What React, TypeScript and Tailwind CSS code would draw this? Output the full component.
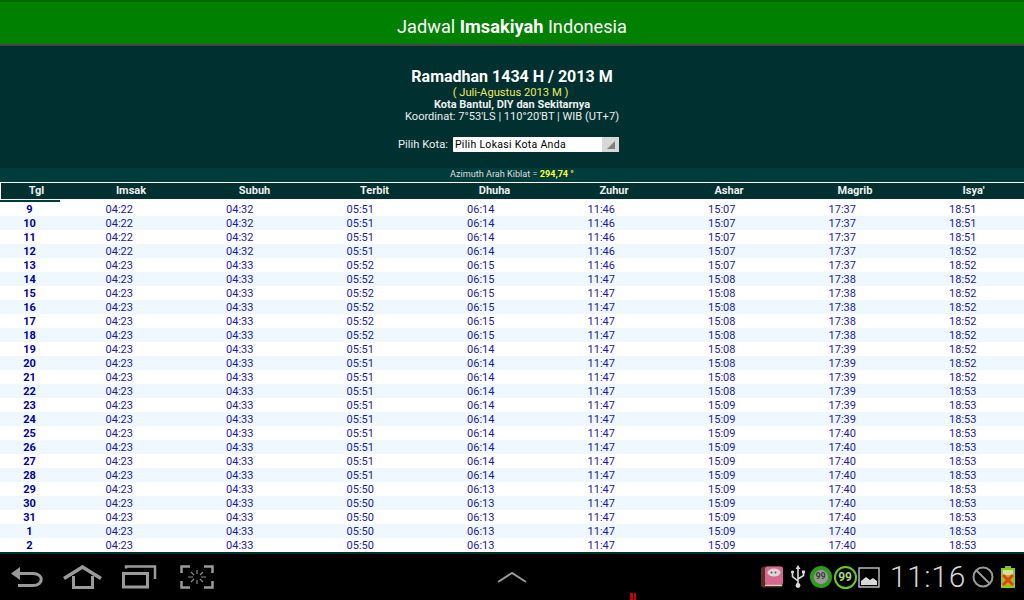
import React from 'react';

type Row = [number, string, string, string, string, string, string, string, string];

const headers = [
  { label: 'Tgl', width: 'w-[60px] pl-[11px]' },
  { label: 'Imsak', width: 'w-[140px]' },
  { label: 'Subuh', width: 'w-[107px]' },
  { label: 'Terbit', width: 'w-[133px]' },
  { label: 'Dhuha', width: 'w-[107px]' },
  { label: 'Zuhur', width: 'w-[132px]' },
  { label: 'Ashar', width: 'w-[98px]' },
  { label: 'Magrib', width: 'w-[154px]' },
  { label: "Isya'", width: 'w-[83px]' },
];

const rows: Row[] = [
  [9, '04:22', '04:32', '05:51', '06:14', '11:46', '15:07', '17:37', '18:51'],
  [10, '04:22', '04:32', '05:51', '06:14', '11:46', '15:07', '17:37', '18:51'],
  [11, '04:22', '04:32', '05:51', '06:14', '11:46', '15:07', '17:37', '18:51'],
  [12, '04:22', '04:32', '05:51', '06:14', '11:46', '15:07', '17:37', '18:52'],
  [13, '04:23', '04:33', '05:52', '06:15', '11:46', '15:07', '17:37', '18:52'],
  [14, '04:23', '04:33', '05:52', '06:15', '11:47', '15:08', '17:38', '18:52'],
  [15, '04:23', '04:33', '05:52', '06:15', '11:47', '15:08', '17:38', '18:52'],
  [16, '04:23', '04:33', '05:52', '06:15', '11:47', '15:08', '17:38', '18:52'],
  [17, '04:23', '04:33', '05:52', '06:15', '11:47', '15:08', '17:38', '18:52'],
  [18, '04:23', '04:33', '05:52', '06:15', '11:47', '15:08', '17:38', '18:52'],
  [19, '04:23', '04:33', '05:51', '06:14', '11:47', '15:08', '17:39', '18:52'],
  [20, '04:23', '04:33', '05:51', '06:14', '11:47', '15:08', '17:39', '18:52'],
  [21, '04:23', '04:33', '05:51', '06:14', '11:47', '15:08', '17:39', '18:52'],
  [22, '04:23', '04:33', '05:51', '06:14', '11:47', '15:08', '17:39', '18:53'],
  [23, '04:23', '04:33', '05:51', '06:14', '11:47', '15:09', '17:39', '18:53'],
  [24, '04:23', '04:33', '05:51', '06:14', '11:47', '15:09', '17:39', '18:53'],
  [25, '04:23', '04:33', '05:51', '06:14', '11:47', '15:09', '17:40', '18:53'],
  [26, '04:23', '04:33', '05:51', '06:14', '11:47', '15:09', '17:40', '18:53'],
  [27, '04:23', '04:33', '05:51', '06:14', '11:47', '15:09', '17:40', '18:53'],
  [28, '04:23', '04:33', '05:51', '06:14', '11:47', '15:09', '17:40', '18:53'],
  [29, '04:23', '04:33', '05:50', '06:13', '11:47', '15:09', '17:40', '18:53'],
  [30, '04:23', '04:33', '05:50', '06:13', '11:47', '15:09', '17:40', '18:53'],
  [31, '04:23', '04:33', '05:50', '06:13', '11:47', '15:09', '17:40', '18:53'],
  [1, '04:23', '04:33', '05:50', '06:13', '11:47', '15:09', '17:40', '18:53'],
  [2, '04:23', '04:33', '05:50', '06:13', '11:47', '15:09', '17:40', '18:53'],
];

const NavIcons = () => (
  <div className="flex items-center">
    {/* back */}
    <svg width="32" height="24" viewBox="0 0 32 24" fill="none" className="ml-[11px]">
      <path d="M8 8.5 H22 C33 8.5 33 20.5 22 20.5 H7" stroke="#9a9a9a" strokeWidth="3" />
      <path d="M0 8.5 L9 2 V15 Z" fill="#9a9a9a" />
    </svg>
    {/* home */}
    <svg width="40" height="24" viewBox="0 0 40 24" fill="none" className="ml-[20px]">
      <path d="M1 13.5 L19.5 2 L38 13.5" stroke="#9a9a9a" strokeWidth="3.5" />
      <path d="M10.5 11 V22.5 H29.5 V11" stroke="#9a9a9a" strokeWidth="3" />
    </svg>
    {/* recent apps */}
    <svg width="36" height="24" viewBox="0 0 36 24" fill="none" className="ml-[18px]">
      <rect x="2.5" y="8.5" width="24" height="13.5" stroke="#9a9a9a" strokeWidth="3" />
      <path d="M5 3.5 V1.5 H34 V14" stroke="#9a9a9a" strokeWidth="2.5" />
    </svg>
    {/* screenshot */}
    <svg width="34" height="24" viewBox="0 0 34 24" fill="none" className="ml-[23px]">
      <path d="M1.5 8 V1.5 H10 M24 1.5 H32.5 V8 M1.5 16 V22.5 H10 M24 22.5 H32.5 V16" stroke="#9a9a9a" strokeWidth="2.5" />
      <path d="M17 5 V9 M17 15 V19 M8 12 H13 M21 12 H26 M11 7 L14 10 M23 7 L20 10 M11 17 L14 14 M23 17 L20 14" stroke="#8a8a8a" strokeWidth="1.2" />
    </svg>
  </div>
);

const StatusIcons = () => (
  <div className="flex items-center h-full">
    {/* notes book */}
    <svg width="22" height="22" viewBox="0 0 22 22">
      <rect x="0" y="0.5" width="22" height="21" rx="3" fill="#5a3020" />
      <rect x="4" y="0.5" width="18" height="18" rx="2.5" fill="#d8688f" />
      <rect x="4" y="18.5" width="17" height="1.5" fill="#e8c8c8" />
      <ellipse cx="13" cy="6.5" rx="6.5" ry="4" fill="#d8d8d8" />
      <circle cx="10.5" cy="6.5" r="1" fill="#555555" />
      <circle cx="14.5" cy="6.5" r="1" fill="#555555" />
    </svg>
    {/* usb */}
    <svg width="16" height="24" viewBox="0 0 16 24" fill="none" className="ml-[7px]">
      <path d="M8 3 V20 M8 16 L2.5 11.5 V8 M8 14 L13.5 10.5 V8" stroke="#d8d8d8" strokeWidth="1.6" />
      <path d="M8 0 L10.5 4 H5.5 Z" fill="#d8d8d8" />
      <circle cx="8" cy="20.5" r="2.4" fill="#d8d8d8" />
      <circle cx="2.5" cy="7" r="1.6" fill="#d8d8d8" />
      <rect x="12" y="5.5" width="3" height="3" fill="#d8d8d8" />
    </svg>
    {/* 99 badge */}
    <div className="ml-[4px] w-[22px] h-[22px] rounded-full bg-[#9a9a9a] border-[4px] border-[#2f9a1e] flex items-center justify-center text-[#3a3a3a] text-[9px] font-bold">
      99
    </div>
    {/* 99 ring */}
    <div className="ml-[2px] w-[23px] h-[23px] rounded-full border-[2px] border-[#66cc22] flex items-center justify-center text-[#a4d985] text-[12px] font-bold">
      99
    </div>
    {/* gallery */}
    <svg width="22" height="21" viewBox="0 0 22 21" fill="none" className="ml-[1px]">
      <rect x="1" y="1" width="20" height="19" stroke="#b8b8b8" strokeWidth="1.5" />
      <path d="M3 18 V14 L8 10 L12 13 L15 11 L19 14 V18 Z" fill="#d8d8d8" />
    </svg>
    <span className="ml-[10px] text-[30px] leading-none font-light text-[#d4d4d4] tracking-[0.7px]">11:16</span>
    {/* do not disturb */}
    <svg width="22" height="22" viewBox="0 0 22 22" fill="none" className="ml-[6px]">
      <circle cx="11" cy="11" r="9.5" stroke="#9a9a9a" strokeWidth="2" />
      <path d="M4.5 4.5 L17.5 17.5" stroke="#9a9a9a" strokeWidth="2" />
    </svg>
    {/* battery */}
    <svg width="14" height="22" viewBox="0 0 14 22" className="ml-[7px]">
      <rect x="4" y="0" width="6" height="2" fill="#7fbf1f" />
      <rect x="0" y="2" width="14" height="20" fill="#8cc820" />
      <rect x="2" y="4" width="10" height="5" fill="#d9d9a0" />
      <path d="M2 9 L12 19 M12 9 L2 19" stroke="#f03a10" strokeWidth="3" />
    </svg>
  </div>
);

export default function App() {
  return (
    <div className="w-[1024px] h-[600px] overflow-hidden flex flex-col bg-black font-['Roboto',sans-serif]">
      <div className="h-[46px] shrink-0 bg-[#008000] border-t-2 border-t-[#006600] border-b-2 border-b-[#444444] pt-[8px] flex items-center justify-center text-white text-[18.2px]">
        <span>
          Jadwal <b>Imsakiyah</b> Indonesia
        </span>
      </div>

      <div className="h-[122px] shrink-0 bg-[#003030] flex flex-col items-center pt-[21px] text-[#eeeeee]">
        <div className="text-[16px] leading-[20px] font-bold text-white">Ramadhan 1434 H / 2013 M</div>
        <div className="text-[11.2px] leading-[14px] text-[#f2e85c] mt-[-1px] mr-[3px]">( Juli-Agustus 2013 M )</div>
        <div className="text-[11px] leading-[11px] font-bold mt-[-1px]">Kota Bantul, DIY dan Sekitarnya</div>
        <div className="text-[11.1px] leading-[13px]">Koordinat: 7°53'LS | 110°20'BT | WIB (UT+7)</div>
        <div className="flex items-center mt-[13px] mr-[7px]">
          <span className="text-[11.2px] mr-[5px] mt-px">Pilih Kota:</span>
          <div className="w-[166px] h-[15px] bg-white rounded-[1px] flex items-center justify-between text-black text-[10.5px] pl-[2px]">
            <span className="tracking-[0.3px]">Pilih Lokasi Kota Anda</span>
            <div className="w-[17px] h-full bg-[#d8d8d8] flex items-end justify-end pr-[4px] pb-[3px]">
              <div className="w-0 h-0 border-l-[8px] border-l-transparent border-b-[8px] border-b-[#808080]" />
            </div>
          </div>
        </div>
      </div>

      <div className="h-[14px] shrink-0 bg-[#003c3c] flex items-center justify-center text-[9.1px] text-[#dddddd]">
        <span>
          Azimuth Arah Kiblat = <b className="text-[#ffff33]">294,74 °</b>
        </span>
      </div>

      <div className="h-[17px] shrink-0 bg-[#003030] border-t border-t-white border-l border-l-white flex items-center text-[11px] font-bold text-[#eeeeee]">
        {headers.map((h) => (
          <div key={h.label} className={`${h.width} shrink-0 text-center`}>
            {h.label}
          </div>
        ))}
      </div>

      <div className="bg-white shrink-0 relative pt-[3px] border-b-2 border-b-[#003030]">
        <div className="absolute left-0 top-[1px] w-[60px] h-[2px] bg-[#003c3c]" />
        {rows.map((r, i) => (
          <div
            key={r[0]}
            className={`grid grid-cols-[59px_repeat(8,120.5px)] h-[14px] items-center text-[11px] text-[#1a1aa6] ${i % 2 === 1 ? 'bg-[#f0f8ff]' : 'bg-white'}`}
          >
            {r.map((c, j) => (
              <div key={j} className={j === 0 ? 'text-center font-bold text-[#00009c]' : 'text-center'}>
                {c}
              </div>
            ))}
          </div>
        ))}
      </div>

      <div className="flex-1 relative flex items-center justify-between bg-black">
        <NavIcons />
        <svg width="30" height="12" viewBox="0 0 30 12" fill="none" className="absolute left-[497px] top-[17px]">
          <path d="M1 11 L15 2 L29 11" stroke="#9a9a9a" strokeWidth="2" />
        </svg>
        <div className="absolute left-[630px] bottom-0 w-[6px] h-[7px] flex gap-px">
          <div className="w-[2.5px] h-full bg-[#cc0000]" />
          <div className="w-[2.5px] h-full bg-[#cc0000]" />
        </div>
        <div className="pr-[9px] h-full">
          <StatusIcons />
        </div>
      </div>
    </div>
  );
}
